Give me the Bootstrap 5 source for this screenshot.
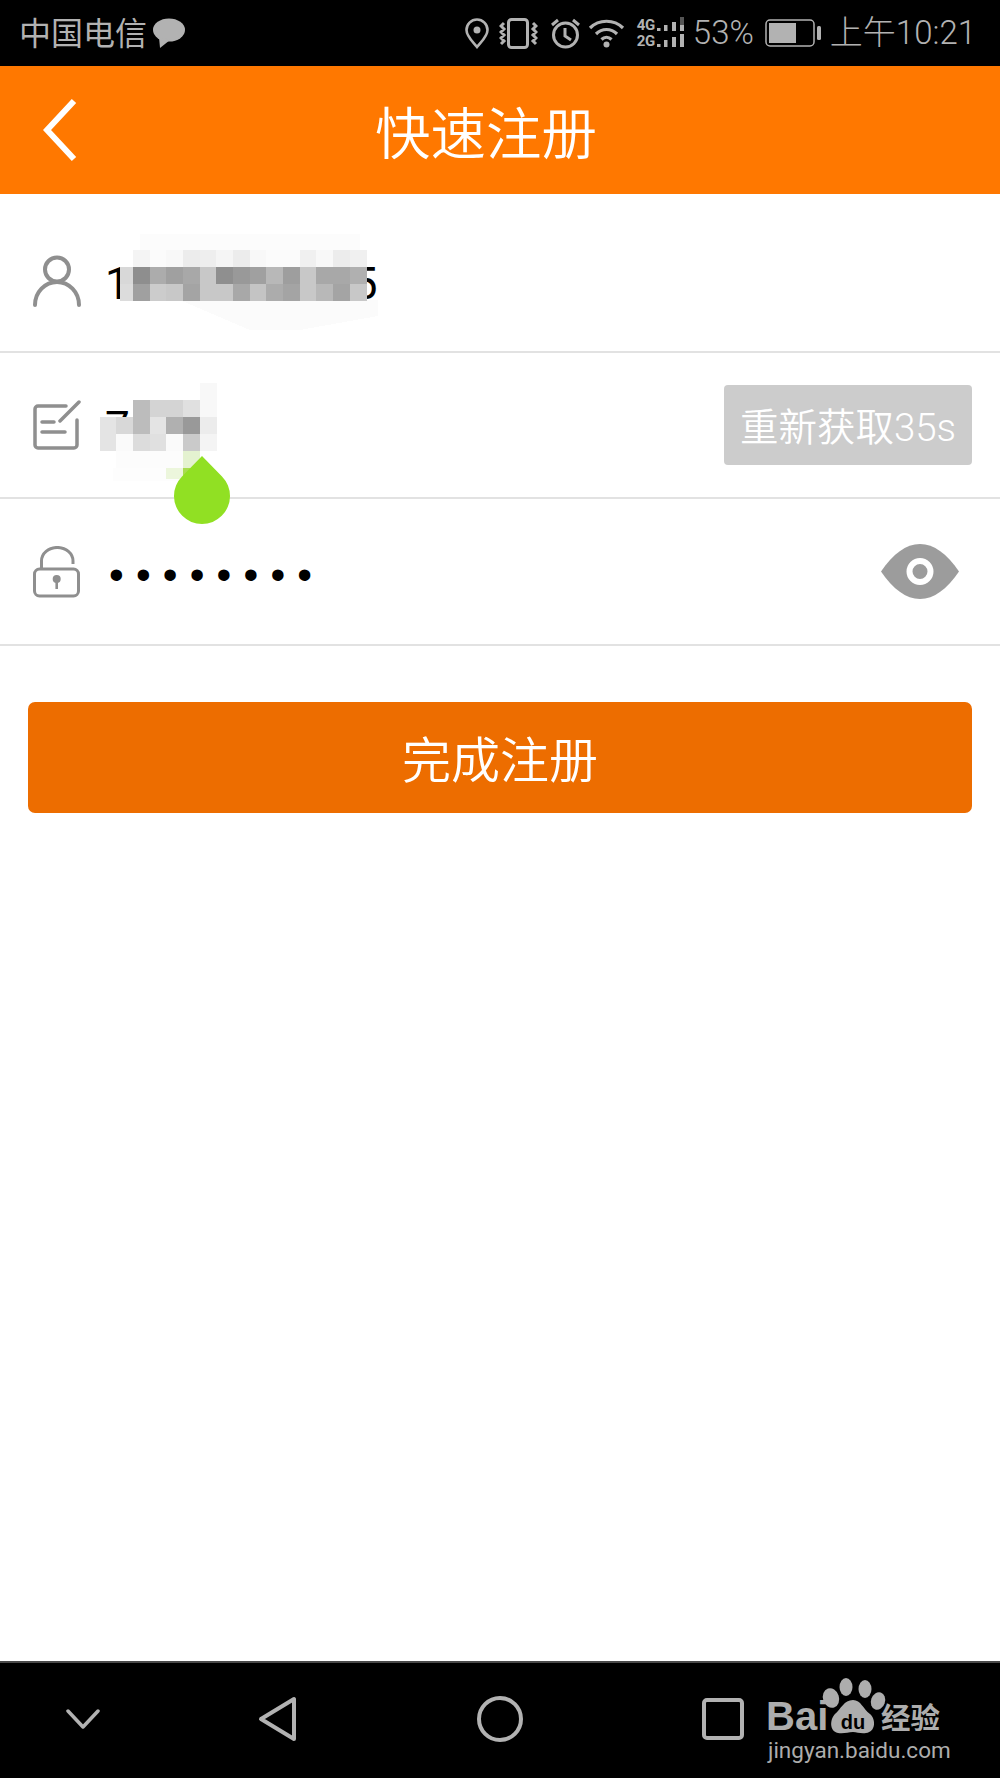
<!DOCTYPE html>
<html lang="zh-CN">
<head>
<meta charset="utf-8">
<title>快速注册</title>
<link href="https://cdn.jsdelivr.net/npm/bootstrap@5.3.0/dist/css/bootstrap.min.css" rel="stylesheet">
<style>
html,body{margin:0;background:#fff}
body{font-family:Roboto,"Noto Sans CJK SC",sans-serif;font-weight:300;color:#000}
.phone{width:1000px;height:1778px;overflow:hidden}
.sbar{height:66px;background:#000;color:#b2b2b2;font-size:33px;line-height:1;padding:0 24px 0 19px}
.sbar svg{display:block;flex:none}
.s-carrier{font-size:32px;font-weight:400;position:relative;top:1px}
.s-bubble{margin-left:6px}
.s-vib{margin-left:10px}.s-alarm{margin-left:12px}.s-wifi{margin-left:7px}.s-sig{margin-left:12px}
.s-net{width:19px;font-family:Roboto,sans-serif;font-weight:700;font-size:15px;line-height:16px;letter-spacing:-.5px}
.s-pct{margin-left:7px}.s-bat{margin-left:11px}.s-time{margin-left:9px}
.s-txt{position:relative;top:-1px}
.topbar{height:128px;background:#ff7800;color:#fff;font-size:55.5px;font-weight:350;padding-left:43px}
.topbar-title{margin-left:298px;position:relative;top:6px}
.frow{position:relative;border-bottom:2px solid #e2e2e2;padding-left:33px;padding-right:28px;background:#fff}
.frow-a{height:159px;padding-top:16px}.frow-b{height:146px}.frow-c{height:147px}
.ftext{font-size:44px;line-height:1;font-weight:400;margin-left:24px;position:relative;top:3px}
.tail{margin-left:223px}
.dots{font-family:"Liberation Sans",sans-serif;font-size:42px;letter-spacing:12.2px;line-height:1;margin-left:28px;font-weight:400;position:relative;top:3px}
.code-btn{width:248px;height:80px;padding:6px 0 0;border:0;border-radius:4px;background:#ccc;color:#fff;font-size:38.5px;font-weight:350;line-height:1;white-space:nowrap}
.code-btn:disabled{background:#ccc;color:#fff;opacity:1}
.eye{margin-right:13px}
.mos{position:absolute;left:0;top:0;pointer-events:none}
.mos rect{width:17px;height:17px}
.mos rect.short{height:11px}
.drop{position:absolute;left:173px;top:101px;z-index:3}
.go-btn{display:block;width:944px;height:111px;margin:56px 0 0 28px;padding:8px 0 0;border:0;border-radius:7px;background:#ed6d00;color:#fff;font-size:49px;font-weight:350;line-height:1}
.go-btn:hover,.go-btn:active{background:#ed6d00!important;color:#fff!important}
.navb{height:117px;background:#000;border-top:2px solid #4a4a4a;padding-bottom:3px}
.navb svg{display:block;flex:none}
.n1{margin-left:66px}.n2{margin-left:158px}.n3{margin-left:180px}.n4{margin-left:179px}.n5{margin-left:20px;position:relative;top:1px}
</style>
</head>
<body>
<div class="phone d-flex flex-column">

  <div class="sbar d-flex align-items-center justify-content-between">
    <div class="d-flex align-items-center">
      <span class="s-carrier">中国电信</span>
      <svg class="s-bubble" width="32" height="30" viewBox="0 0 32 30"><ellipse cx="16" cy="12" rx="16" ry="11.500" fill="#b2b2b2"/><path d="M6 19 L7 30 L17 22Z" fill="#b2b2b2"/></svg>
    </div>
    <div class="d-flex align-items-center">
      <svg width="24" height="31" viewBox="0 0 24 31"><path d="M12 1.500a10.500 10.500 0 0 1 10.500 10.500c0 6.500-6.500 12-10.500 17C8 24 1.500 18.500 1.500 12A10.500 10.500 0 0 1 12 1.500z" fill="none" stroke="#b2b2b2" stroke-width="2.600"/><circle cx="12" cy="12" r="3.500" fill="#b2b2b2"/></svg>
      <svg class="s-vib" width="39" height="31" viewBox="0 0 39 31" fill="none" stroke="#b2b2b2" stroke-width="3"><rect x="9.500" y="1.500" width="19" height="28" rx="3"/><path d="M5 5L2 8l3 3-3 3 3 3-3 3 3 3-3 3M34 5l3 3-3 3 3 3-3 3 3 3-3 3 3 3"/></svg>
      <svg class="s-alarm" width="31" height="31" viewBox="0 0 31 31" fill="none" stroke="#b2b2b2" stroke-width="3"><circle cx="15.500" cy="17" r="12"/><path d="M15 10v8l6 4M2 7l6-5M29 7l-6-5"/></svg>
      <svg class="s-wifi" width="37" height="30" viewBox="0 0 37 30" fill="none" stroke="#b2b2b2" stroke-width="3.200"><path d="M2 10C11 1 26 1 35 10M8 16c6-6 15-6 21 0M13.500 21.500c3-3 7-3 10 0"/><circle cx="18.500" cy="26.500" r="3" fill="#b2b2b2" stroke="none"/></svg>
      <div class="s-sig s-net d-flex flex-column align-items-start">
        <span>4G</span><span>2G</span>
      </div>
      <svg width="30" height="32" viewBox="24 0 30 32"><g fill="#b2b2b2"><rect x="25" y="11" width="3.500" height="3"/><rect x="32" y="8" width="3.500" height="6"/><rect x="40" y="5" width="4" height="9"/><rect x="48" y="8" width="4" height="6"/><rect x="25" y="27" width="3.500" height="3"/><rect x="32" y="23" width="3.500" height="7"/><rect x="40" y="20" width="4" height="10"/><rect x="48" y="17" width="4" height="13"/></g><rect x="48" y="0" width="4" height="8" fill="#555"/></svg>
      <span class="s-pct s-txt">53%</span>
      <svg class="s-bat" width="56" height="28" viewBox="0 0 56 28"><rect x="1" y="1" width="48" height="26" rx="4" fill="none" stroke="#b2b2b2" stroke-width="1.500"/><rect x="4" y="4" width="27" height="20" fill="#b2b2b2"/><rect x="52" y="7" width="4" height="14" rx="1.500" fill="#b2b2b2"/></svg>
      <span class="s-time s-txt">上午10:21</span>
    </div>
  </div>

  <div class="topbar d-flex align-items-center">
    <svg width="34" height="64" viewBox="0 0 34 64"><path d="M31 3 L4 32 L31 61" fill="none" stroke="#fff" stroke-width="6"/></svg>
    <span class="topbar-title">快速注册</span>
  </div>

  <div class="frow frow-a d-flex align-items-center">
    <svg width="48" height="52" viewBox="0 0 48 52" fill="none" stroke="#8f8f8f" stroke-width="4" stroke-linecap="round"><circle cx="24" cy="14.500" r="12"/><path d="M2 50c0-13 10-23 22-23s22 10 22 23"/></svg>
    <span class="ftext">1<span class="tail">5</span></span>
    <svg class="mos" width="400" height="158" viewBox="0 0 400 158" shape-rendering="crispEdges">
      <path d="M180 106H378V122L300 136H250z" fill="#fbfbfb"/>
      <path d="M140 40H360V56H140z" fill="#fcfcfc"/>
      <g><rect x="133" y="56" fill="#f4f4f4"/><rect x="150" y="56" fill="#fbfbfb"/><rect x="166" y="56" fill="#f8f8f8"/><rect x="183" y="56" fill="#ececec"/><rect x="200" y="56" fill="#eeeeee"/><rect x="216" y="56" fill="#f5f5f5"/><rect x="233" y="56" fill="#ececec"/><rect x="250" y="56" fill="#f8f8f8"/><rect x="266" y="56" fill="#fbfbfb"/><rect x="283" y="56" fill="#fbfbfb"/><rect x="300" y="56" fill="#f0f0f0"/><rect x="316" y="56" fill="#f8f8f8"/><rect x="333" y="56" fill="#ececec"/><rect x="350" y="56" fill="#f0f0f0"/>
      <rect x="120" y="73" fill="#d8d8d8"/><rect x="133" y="73" fill="#8e8e8e"/><rect x="150" y="73" fill="#acacac"/><rect x="166" y="73" fill="#a0a0a0"/><rect x="183" y="73" fill="#a8a8a8"/><rect x="200" y="73" fill="#c8c8c8"/><rect x="216" y="73" fill="#8f8f8f"/><rect x="233" y="73" fill="#999999"/><rect x="250" y="73" fill="#a0a0a0"/><rect x="266" y="73" fill="#b8b8b8"/><rect x="283" y="73" fill="#9e9e9e"/><rect x="300" y="73" fill="#c8c8c8"/><rect x="316" y="73" fill="#a8a8a8"/><rect x="333" y="73" fill="#a8a8a8"/><rect x="350" y="73" fill="#b0b0b0"/>
      <rect x="120" y="90" fill="#dcdcdc"/><rect x="133" y="90" fill="#a0a0a0"/><rect x="150" y="90" fill="#cccccc"/><rect x="166" y="90" fill="#c8c8c8"/><rect x="183" y="90" fill="#a4a4a4"/><rect x="200" y="90" fill="#c8c8c8"/><rect x="216" y="90" fill="#c8c8c8"/><rect x="233" y="90" fill="#a8a8a8"/><rect x="250" y="90" fill="#c4c4c4"/><rect x="266" y="90" fill="#acacac"/><rect x="283" y="90" fill="#a4a4a4"/><rect x="300" y="90" fill="#c8c8c8"/><rect x="316" y="90" fill="#b8b8b8"/><rect x="333" y="90" fill="#a4a4a4"/><rect x="350" y="90" fill="#c8c8c8"/></g>
    </svg>
  </div>

  <div class="frow frow-b d-flex align-items-center justify-content-between">
    <div class="d-flex align-items-center">
      <svg width="48" height="50" viewBox="0 0 48 50" fill="none" stroke="#8f8f8f" stroke-width="3.500" stroke-linecap="round" stroke-linejoin="round"><path d="M33 6H5a3 3 0 0 0-3 3v36a3 3 0 0 0 3 3h36a3 3 0 0 0 3-3V20"/><path d="M27 21L46 2M9 22h12M9 32h23"/></svg>
      <span class="ftext">7</span>
    </div>
    <button class="btn code-btn" type="button" disabled>重新获取35s</button>
    <svg class="mos" width="260" height="143" viewBox="0 0 260 143" shape-rendering="crispEdges">
      <path d="M113 115H183V128H113z" fill="#fdfdfd"/>
      <rect x="200" y="30" fill="#f8f8f8"/><rect x="133" y="47" fill="#bcbcbc"/><rect x="150" y="47" fill="#d4d4d4"/><rect x="166" y="47" fill="#d4d4d4"/><rect x="183" y="47" fill="#e0e0e0"/><rect x="200" y="47" fill="#f8f8f8"/>
      <rect x="100" y="64" fill="#e4e4e4"/><rect x="116" y="64" fill="#d8d8d8"/><rect x="133" y="64" fill="#bcbcbc"/><rect x="150" y="64" fill="#e4e4e4"/><rect x="166" y="64" fill="#b0b0b0"/><rect x="183" y="64" fill="#999999"/><rect x="200" y="64" fill="#ececec"/>
      <rect x="100" y="81" fill="#e4e4e4"/><rect x="116" y="81" fill="#fafafa"/><rect x="133" y="81" fill="#dcdcdc"/><rect x="150" y="81" fill="#e0e0e0"/><rect x="166" y="81" fill="#fafafa"/><rect x="183" y="81" fill="#cacaca"/><rect x="200" y="81" fill="#f4f4f4"/>
      <rect x="116" y="98" fill="#fcfcfc"/><rect x="133" y="98" fill="#fcfcfc"/><rect x="150" y="98" fill="#fcfcfc"/><rect x="166" y="98" fill="#fcfcfc"/><rect x="183" y="98" fill="#e4f2d0"/>
      <rect class="short" x="166" y="115" fill="#ecf6dc"/><rect x="183" y="115" fill="#a8dc50"/>
    </svg>
    <svg class="drop" width="58" height="70" viewBox="0 0 58 70"><path d="M29 2 L49 22.400 A28 28 0 1 1 9 22.400 Z" fill="#91e023"/></svg>
  </div>

  <div class="frow frow-c d-flex align-items-center justify-content-between">
    <div class="d-flex align-items-center">
      <svg width="48" height="52" viewBox="0 0 48 52" fill="none" stroke="#8f8f8f" stroke-width="3"><rect x="1.500" y="23" width="44" height="27" rx="5"/><path d="M8.500 22V15A15.700 13.500 0 0 1 40 15V18"/><circle cx="23.700" cy="33" r="4" fill="#8f8f8f" stroke="none"/><path d="M23.700 34v9" stroke-width="2.600"/></svg>
      <span class="dots">••••••••</span>
    </div>
    <svg class="eye" width="78" height="55" viewBox="0 0 78 55"><path d="M0 27.500C12 10 25 0 39 0s27 10 39 27.500C66 45 53 55 39 55S12 45 0 27.500z" fill="#9c9c9c"/><circle cx="39" cy="27.500" r="10.500" fill="none" stroke="#fff" stroke-width="6"/></svg>
  </div>

  <button class="btn go-btn" type="button">完成注册</button>

  <div class="flex-grow-1"></div>

  <div class="navb d-flex align-items-center">
    <svg class="n1" width="34" height="22" viewBox="0 0 34 22"><path d="M2 3 L17 19 L32 3" fill="none" stroke="#b2b2b2" stroke-width="3.500" stroke-linecap="round" stroke-linejoin="round"/></svg>
    <svg class="n2" width="39" height="46" viewBox="0 0 39 46"><path d="M36 3 V43 L3 23 Z" fill="none" stroke="#b2b2b2" stroke-width="4" stroke-linejoin="round"/></svg>
    <svg class="n3" width="46" height="46" viewBox="0 0 46 46"><circle cx="23" cy="23" r="21" fill="none" stroke="#b2b2b2" stroke-width="4"/></svg>
    <svg class="n4" width="42" height="42" viewBox="0 0 42 42"><rect x="2" y="2" width="38" height="38" rx="3" fill="none" stroke="#b2b2b2" stroke-width="4"/></svg>
    <svg class="n5" width="190" height="90" viewBox="0 0 190 90">
      <text x="2" y="55" fill="#adadad" font-family="Liberation Sans,sans-serif" font-weight="700" font-size="40">Bai</text>
      <g fill="#adadad" transform="translate(-12 3)">
        <ellipse cx="79" cy="20" rx="8" ry="10" transform="rotate(-18 79 20)"/>
        <ellipse cx="94" cy="9" rx="6.500" ry="9"/>
        <ellipse cx="113" cy="11" rx="6.500" ry="9"/>
        <ellipse cx="126" cy="23" rx="7" ry="9" transform="rotate(18 126 23)"/>
        <path d="M101 22c8 0 10 9 17 14 6 5 6 18-4 19-5 1-9-1-13-1-5 0-9 2-15 1-9-2-8-14-3-19 6-5 9-14 18-14z"/>
      </g>
      <text x="89" y="54" text-anchor="middle" fill="#000" font-family="Liberation Sans,sans-serif" font-weight="700" font-size="20">du</text>
      <text x="117" y="54" fill="#adadad" font-family="Noto Sans CJK SC,sans-serif" font-weight="700" font-size="29" textLength="59" lengthAdjust="spacingAndGlyphs">经验</text>
      <text x="4" y="83" fill="#adadad" font-family="Roboto,sans-serif" font-weight="400" font-size="22.500">jingyan.baidu.com</text>
    </svg>
  </div>

</div>
<script src="https://cdn.jsdelivr.net/npm/bootstrap@5.3.0/dist/js/bootstrap.bundle.min.js"></script>
</body>
</html>
